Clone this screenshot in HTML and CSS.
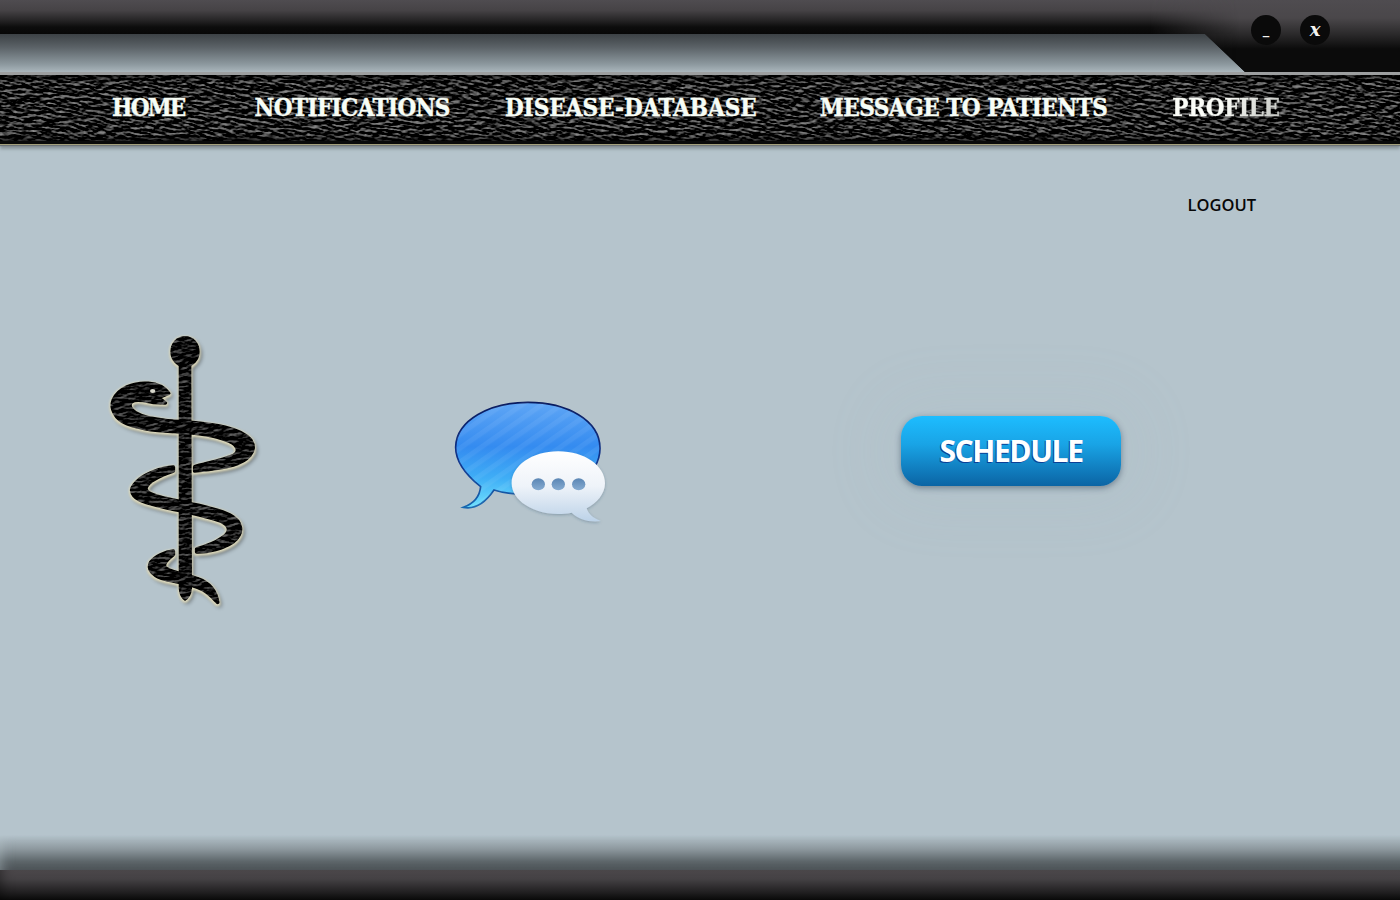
FILE: index.html
```html
<!DOCTYPE html>
<html lang="en">
<head>
<meta charset="utf-8">
<title>Doctor Dashboard</title>
<link rel="stylesheet" href="styles.css">
</head>
<body>
<div class="app">
  <header class="titlebar">
    <div class="titlebar-top"></div>
    <div class="titlebar-lower"></div>
    <div class="window-controls">
      <button class="win-btn win-min">_</button>
      <button class="win-btn win-close">x</button>
    </div>
  </header>

  <nav class="nav">
    <svg class="leather" width="100%" height="100%" aria-hidden="true">
      <defs>
        <filter id="leather-tex" x="0" y="0" width="100%" height="100%" color-interpolation-filters="sRGB">
          <feTurbulence type="fractalNoise" baseFrequency="0.11 0.38" numOctaves="4" seed="11" result="n"/>
          <feDiffuseLighting in="n" surfaceScale="2.2" diffuseConstant="1" lighting-color="#ffffff" result="lit">
            <feDistantLight azimuth="250" elevation="48"/>
          </feDiffuseLighting>
          <feColorMatrix in="lit" type="matrix" values="1.7 0 0 0 -1.16  1.7 0 0 0 -1.16  1.7 0 0 0 -1.16  0 0 0 0 1"/>
        </filter>
        <linearGradient id="leather-edge" x1="0" y1="0" x2="0" y2="1">
          <stop offset="0" stop-color="#000" stop-opacity="0.55"/>
          <stop offset="0.12" stop-color="#000" stop-opacity="0"/>
          <stop offset="0.9" stop-color="#000" stop-opacity="0"/>
          <stop offset="1" stop-color="#000" stop-opacity="0.6"/>
        </linearGradient>
      </defs>
      <rect width="100%" height="100%" fill="#1a1a1b"/>
      <rect x="-60" y="-320" width="1520" height="720" filter="url(#leather-tex)" transform="rotate(9 700 34)"/>
      <rect width="100%" height="100%" fill="url(#leather-edge)"/>
    </svg>
    <a class="nav-link nav-home">HOME</a>
    <a class="nav-link nav-notifications">NOTIFICATIONS</a>
    <a class="nav-link nav-disease">DISEASE-DATABASE</a>
    <a class="nav-link nav-message">MESSAGE TO PATIENTS</a>
    <a class="nav-link nav-profile">PROFILE</a>
  </nav>

  <main class="content">
    <div class="logout-row"><a class="logout">LOGOUT</a></div>
    <div class="feature-row">
      <svg class="caduceus" viewBox="0 0 570 870" width="190" height="290" role="img" aria-label="Rod of Asclepius">
        <defs>
          <filter id="emboss" x="-10%" y="-10%" width="120%" height="120%" color-interpolation-filters="sRGB">
            <feTurbulence type="fractalNoise" baseFrequency="0.035 0.1" numOctaves="4" seed="4" result="n"/>
            <feDiffuseLighting in="n" surfaceScale="5" lighting-color="#ffffff" result="lit">
              <feDistantLight azimuth="250" elevation="50"/>
            </feDiffuseLighting>
            <feColorMatrix in="lit" type="matrix" values="1.5 0 0 0 -1.12  1.5 0 0 0 -1.12  1.5 0 0 0 -1.12  0 0 0 0 1" result="skin"/>
            <feComposite in="skin" in2="SourceAlpha" operator="in" result="skinIn"/>
            <feMorphology in="SourceAlpha" operator="dilate" radius="2" result="fat"/>
            <feOffset in="fat" dx="1" dy="2" result="fatOff"/>
            <feFlood flood-color="#e0dcbe"/>
            <feComposite in2="fatOff" operator="in"/>
            <feGaussianBlur stdDeviation="2.4" result="rim"/>
            <feGaussianBlur in="SourceAlpha" stdDeviation="7"/>
            <feOffset dx="6" dy="9"/>
            <feComponentTransfer result="shadow"><feFuncA type="linear" slope="0.5"/></feComponentTransfer>
            <feMerge>
              <feMergeNode in="shadow"/>
              <feMergeNode in="rim"/>
              <feMergeNode in="skinIn"/>
            </feMerge>
          </filter>
        </defs>
        <g filter="url(#emboss)" fill="#0b0b0b" stroke="#0b0b0b" stroke-width="11" stroke-linejoin="round">
          <ellipse cx="285" cy="80" rx="44" ry="47" stroke="none"/>
          <path d="M266 110 H304 L306 790 Q304 818 285 828 Q268 818 266 790 Z" stroke="none"/>
          <path d="M236 205 L205 218 L226 234 L190 232 C165 228 140 220 125 230 C112 242 125 262 155 272 C200 288 250 288 300 292 C370 298 450 308 482 345 C505 380 470 408 430 420 C395 430 345 435 314 438 L314 425 C350 415 400 405 430 392 C450 382 445 362 420 350 C380 330 330 325 285 322 C230 318 165 318 110 296 C75 282 60 250 70 225 C85 190 130 172 175 175 C205 177 225 190 236 205 Z"/>
          <path d="M250 426 C215 428 170 445 150 462 C135 475 125 485 125 495 C128 525 165 532 215 545 C280 560 345 570 395 590 C425 605 420 625 395 640 C375 655 345 665 320 672 L320 681 C355 682 400 670 430 650 C462 625 458 590 420 570 C370 545 290 535 225 520 C195 512 165 505 168 488 C175 468 215 450 250 438 Z"/>
          <path d="M250 678 C225 680 195 695 182 712 C172 730 185 748 215 760 C250 772 300 772 340 795 C362 808 375 825 383 832 C378 800 360 775 325 762 C295 750 250 745 228 730 C215 720 230 705 250 689 Z"/>
        </g>
        <ellipse cx="188" cy="198" rx="8" ry="6" fill="#d8d8cc"/>
      </svg>

      <svg class="messages" viewBox="0 0 540 435" width="180" height="145" role="img" aria-label="Messages">
        <defs>
          <linearGradient id="blue" x1="0" y1="0" x2="0" y2="1">
            <stop offset="0" stop-color="#5fa6f5"/>
            <stop offset="0.42" stop-color="#348bf0"/>
            <stop offset="0.72" stop-color="#3faef6"/>
            <stop offset="1" stop-color="#6fe0fd"/>
          </linearGradient>
          <linearGradient id="blue-edge" x1="0" y1="0" x2="0" y2="1">
            <stop offset="0" stop-color="#081a5e"/>
            <stop offset="0.6" stop-color="#0f358e"/>
            <stop offset="1" stop-color="#1768b0"/>
          </linearGradient>
          <linearGradient id="white" x1="0" y1="0" x2="0" y2="1">
            <stop offset="0" stop-color="#ffffff"/>
            <stop offset="0.5" stop-color="#eef3f9"/>
            <stop offset="1" stop-color="#bcd2e8"/>
          </linearGradient>
          <linearGradient id="dot" x1="0" y1="0" x2="0" y2="1">
            <stop offset="0" stop-color="#5b86b4"/>
            <stop offset="1" stop-color="#86acd2"/>
          </linearGradient>
          <pattern id="stripes" width="34" height="34" patternUnits="userSpaceOnUse" patternTransform="rotate(-35)">
            <rect width="34" height="15" fill="#ffffff" opacity="0.06"/>
          </pattern>
          <filter id="soft" x="-10%" y="-10%" width="120%" height="120%">
            <feDropShadow dx="0" dy="3" stdDeviation="4" flood-color="#2c4a66" flood-opacity="0.35"/>
          </filter>
        </defs>
        <path d="M122 290 C72 250 46 210 47 170 C50 90 150 37 264 37 C380 37 480 90 480 175 C480 260 380 310 268 312 C222 313 192 310 162 300 C138 335 110 360 70 352 C104 340 119 320 122 290 Z" fill="url(#blue)" stroke="url(#blue-edge)" stroke-width="5"/>
        <path d="M122 290 C72 250 46 210 47 170 C50 90 150 37 264 37 C380 37 480 90 480 175 C480 260 380 310 268 312 C222 313 192 310 162 300 C138 335 110 360 70 352 C104 340 119 320 122 290 Z" fill="url(#stripes)"/>
        <path filter="url(#soft)" d="M355 184 C435 184 495 228 495 280 C495 312 470 340 440 355 C445 372 460 385 482 393 C450 398 415 388 395 368 C380 371 368 372 355 372 C280 372 215 332 215 280 C215 228 275 184 355 184 Z" fill="url(#white)"/>
        <ellipse cx="295" cy="283" rx="20" ry="18" fill="url(#dot)"/>
        <ellipse cx="355" cy="283" rx="20" ry="18" fill="url(#dot)"/>
        <ellipse cx="416" cy="283" rx="20" ry="18" fill="url(#dot)"/>
      </svg>

      <a class="schedule">SCHEDULE</a>
    </div>
  </main>

  <footer class="footer">
    <div class="footer-fade"></div>
    <div class="footer-bar"></div>
  </footer>
</div>
</body>
</html>
```

FILE: styles.css
```css
* { box-sizing: border-box; }
html, body { margin: 0; height: 100%; overflow: hidden; }
body { background: #b5c4cc; font-family: "Open Sans", "Liberation Sans", sans-serif; }

.app { width: 1400px; height: 900px; display: flex; flex-direction: column; background: #b5c4cc; }

/* Title bar */
.titlebar { position: relative; height: 72px; flex: none; overflow: hidden; background: #0b0b0b; }
.titlebar-top { height: 34px; background: linear-gradient(180deg, #4f4c50 0%, #464346 30%, #252425 60%, #0c0c0c 80%, #070707 100%); }
.titlebar-lower { height: 38px; background: linear-gradient(180deg, #3c4145 0%, #5b6267 35%, #8d999f 80%, #aab6bc 100%); clip-path: polygon(0 0, 1205px 0, 1245px 100%, 0 100%); }
.titlebar::after { content: ""; position: absolute; inset: 0 0 0 1150px; background: linear-gradient(180deg, #4f4c50 0%, #4a474a 25%, #2a292a 48%, #0b0b0b 68%, #0b0b0b 100%); -webkit-mask-image: linear-gradient(90deg, transparent 0, #000 90px); mask-image: linear-gradient(90deg, transparent 0, #000 90px); clip-path: polygon(0 0, 100% 0, 100% 100%, 95px 100%, 55px 34px, 0 34px); }
.window-controls { position: absolute; z-index: 2; top: 15px; left: 1251px; display: flex; gap: 19px; }
.win-btn { width: 30px; height: 30px; padding: 0; border: 0; border-radius: 50%; background: #0a0a0a; color: #f4f4f0; font: italic 700 18px/26px "DejaVu Serif", serif; }
.win-min { font-size: 13px; line-height: 30px; }

/* Nav */
.nav { position: relative; height: 73px; flex: none; display: flex; align-items: center; padding: 0 0 3px 112px; background: #0a0a0a; border-top: 3px solid #9d9fa0; border-bottom: 1px solid #a39f7c; box-shadow: 0 1px 1px #6d7478, 0 4px 3px #8a959b; }
.leather { position: absolute; left: 0; top: 0; height: 66px; }
.nav-link { position: relative; color: #f7fdf6; font: 700 24px/1 "DejaVu Serif", serif; font-stretch: condensed; white-space: nowrap; -webkit-text-stroke: .4px #f7fdf6; }
.nav-home { letter-spacing: -1.75px; }
.nav-notifications { margin-left: 70px; letter-spacing: -.6px; }
.nav-disease { margin-left: 55px; }
.nav-message { margin-left: 63px; letter-spacing: -.47px; }
.nav-profile { margin-left: 65px; letter-spacing: -.4px; -webkit-text-stroke: .4px transparent; background: linear-gradient(115deg, #fbfdf8 45%, #c4c6c2 100%); -webkit-background-clip: text; background-clip: text; color: transparent; }

/* Content */
.content { flex: 1; min-height: 0; position: relative; }
.logout-row { display: flex; justify-content: flex-end; padding: 49px 144px 0 0; }
.logout { color: #070707; font: 600 16.5px/22px "Open Sans", sans-serif; }
.feature-row { display: flex; align-items: flex-start; margin-top: 107px; padding-left: 90px; }
.caduceus { flex: none; margin-top: 2px; }
.messages { flex: none; margin: 67px 0 0 160px; }
.schedule { flex: none; width: 220px; height: 70px; margin: 93px 0 0 281px; display: flex; align-items: center; justify-content: center; border-radius: 21px; background: linear-gradient(180deg, #1dbdff 0%, #19a4e6 40%, #0b64a4 100%); box-shadow: 0 2px 6px rgba(30,50,70,.45), 0 0 60px 20px rgba(160,185,200,.1); color: #fff; font: 700 30px/1 "Open Sans", sans-serif; letter-spacing: -1.35px; text-shadow: -1px 1px 0 #0b3f96; }

/* Footer */
.footer { flex: none; height: 65px; }
.footer-fade { height: 35px; background: linear-gradient(180deg, #b5c4cc 0%, #8d989e 40%, #5e676b 75%, #4a5054 100%); box-shadow: inset 10px 0 14px -10px rgba(181,196,204,.6); }
.footer-bar { height: 30px; background: linear-gradient(180deg, #4d494c 0%, #444144 30%, #1c1b1c 80%, #0a0a0a 100%); box-shadow: inset 10px 0 14px -10px rgba(0,0,0,.5); }
```
